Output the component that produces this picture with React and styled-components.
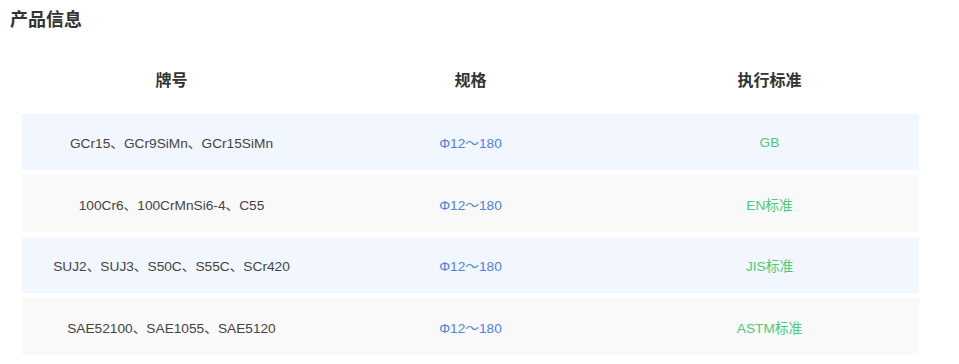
import React from 'react'
import styled, { createGlobalStyle } from 'styled-components'

const GlobalStyle = createGlobalStyle`
  * {
    box-sizing: border-box;
  }
  body {
    margin: 0;
    background: #fff;
    font-family: "Liberation Sans", Arial, "Noto Sans CJK SC", sans-serif;
    color: #333;
  }
`

const rows = [
  { grade: 'GCr15、GCr9SiMn、GCr15SiMn', spec: 'Φ12～180', standard: 'GB' },
  { grade: '100Cr6、100CrMnSi6-4、C55', spec: 'Φ12～180', standard: 'EN标准' },
  { grade: 'SUJ2、SUJ3、S50C、S55C、SCr420', spec: 'Φ12～180', standard: 'JIS标准' },
  { grade: 'SAE52100、SAE1055、SAE5120', spec: 'Φ12～180', standard: 'ASTM标准' },
]

const App = () => {
  return (
    <>
      <GlobalStyle />
      <Section>
        <Title>产品信息</Title>
        <Table>
          <HeadRow>
            <HeadCell>牌号</HeadCell>
            <HeadCell>规格</HeadCell>
            <HeadCell>执行标准</HeadCell>
          </HeadRow>
          {rows.map((row, i) => (
            <Row key={row.grade} $alt={i % 2 === 1}>
              <Cell>{row.grade}</Cell>
              <Cell $tone="blue">{row.spec}</Cell>
              <Cell $tone="green">{row.standard}</Cell>
            </Row>
          ))}
        </Table>
      </Section>
    </>
  )
}

const Section = styled.div`
  width: 959px;
  padding: 9px 40px 0 10px;
`

const Title = styled.h2`
  margin: 0;
  font-size: 18px;
  line-height: 22px;
  font-weight: bold;
  color: #333;
`

const Table = styled.div`
  display: flex;
  flex-direction: column;
  gap: 5.3px;
  margin: 0 0 0 12px;
  width: 897px;
`

const HeadRow = styled.div`
  display: grid;
  grid-template-columns: repeat(3, 1fr);
  height: 77.7px;
  align-items: center;
`

const HeadCell = styled.div`
  text-align: center;
  font-size: 16px;
  font-weight: bold;
  color: #333;
  padding-top: 19px;
`

const Row = styled.div`
  display: grid;
  grid-template-columns: repeat(3, 1fr);
  align-items: center;
  height: 56.2px;
  background: ${p => (p.$alt ? '#f9f9f9' : '#f2f6fe')};
`

const Cell = styled.div`
  text-align: center;
  font-size: 13.7px;
  color: ${p => (p.$tone === 'blue' ? '#4f82e2' : p.$tone === 'green' ? '#4ccb78' : '#444')};
`

export default App
